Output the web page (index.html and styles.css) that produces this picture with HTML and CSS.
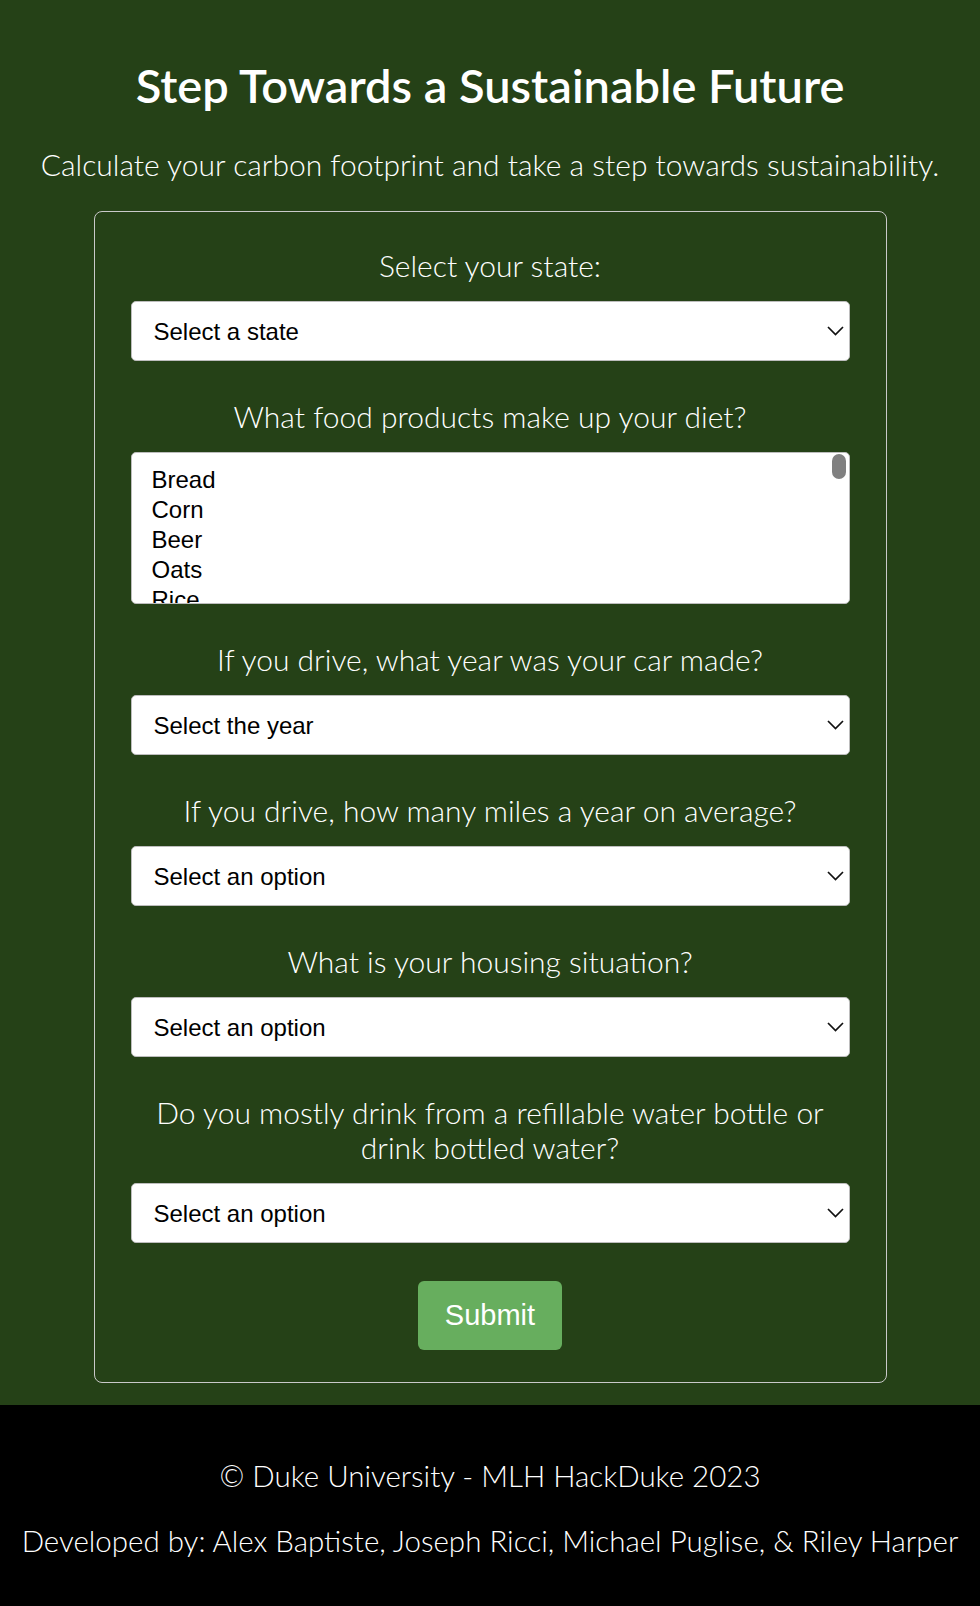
FILE: index.html
```html
<!DOCTYPE html>
<html lang="en">
<head>
<meta charset="utf-8">
<title>Step Towards a Sustainable Future</title>
<link rel="stylesheet" href="styles.css">
</head>
<body>
<header class="hero">
  <h1 class="hero-title">Step Towards a Sustainable Future</h1>
  <p class="hero-sub">Calculate your carbon footprint and take a step towards sustainability.</p>
</header>
<main class="card">
  <form class="form">
    <div class="field">
      <label class="field-label" for="state">Select your state:</label>
      <div class="select-wrap">
        <select id="state" class="select"><option>Select a state</option></select>
        <svg class="chevron" width="17" height="10" viewBox="0 0 17 10"><path d="M1 1 L8.5 8.5 L16 1" fill="none" stroke="#111" stroke-width="1.7"/></svg>
      </div>
    </div>
    <div class="field">
      <label class="field-label">What food products make up your diet?</label>
      <div class="listbox" role="listbox" aria-multiselectable="true">
        <div class="list-item">Bread</div>
        <div class="list-item">Corn</div>
        <div class="list-item">Beer</div>
        <div class="list-item">Oats</div>
        <div class="list-item">Rice</div>
        <span class="thumb"></span>
      </div>
    </div>
    <div class="field">
      <label class="field-label" for="year">If you drive, what year was your car made?</label>
      <div class="select-wrap">
        <select id="year" class="select"><option>Select the year</option></select>
        <svg class="chevron" width="17" height="10" viewBox="0 0 17 10"><path d="M1 1 L8.5 8.5 L16 1" fill="none" stroke="#111" stroke-width="1.7"/></svg>
      </div>
    </div>
    <div class="field">
      <label class="field-label" for="miles">If you drive, how many miles a year on average?</label>
      <div class="select-wrap">
        <select id="miles" class="select"><option>Select an option</option></select>
        <svg class="chevron" width="17" height="10" viewBox="0 0 17 10"><path d="M1 1 L8.5 8.5 L16 1" fill="none" stroke="#111" stroke-width="1.7"/></svg>
      </div>
    </div>
    <div class="field">
      <label class="field-label" for="housing">What is your housing situation?</label>
      <div class="select-wrap">
        <select id="housing" class="select"><option>Select an option</option></select>
        <svg class="chevron" width="17" height="10" viewBox="0 0 17 10"><path d="M1 1 L8.5 8.5 L16 1" fill="none" stroke="#111" stroke-width="1.7"/></svg>
      </div>
    </div>
    <div class="field">
      <label class="field-label narrow" for="water">Do you mostly drink from a refillable water bottle or drink bottled water?</label>
      <div class="select-wrap">
        <select id="water" class="select"><option>Select an option</option></select>
        <svg class="chevron" width="17" height="10" viewBox="0 0 17 10"><path d="M1 1 L8.5 8.5 L16 1" fill="none" stroke="#111" stroke-width="1.7"/></svg>
      </div>
    </div>
    <div class="actions">
      <button type="button" class="submit">Submit</button>
    </div>
  </form>
</main>
<footer class="footer">
  <p class="footer-line">© Duke University - MLH HackDuke 2023</p>
  <p class="footer-line">Developed by: Alex Baptiste, Joseph Ricci, Michael Puglise, &amp; Riley Harper</p>
</footer>
</body>
</html>
```
FILE: styles.css
```css
* { box-sizing: border-box; }
html, body { margin: 0; padding: 0; }
body {
  background: #254117;
  color: #fff;
  font-family: "Lato", "Open Sans", sans-serif;
  font-weight: 300;
}
.hero { text-align: center; padding-top: 58px; }
.hero-title {
  margin: 0;
  font-size: 47px;
  line-height: 54px;
  font-weight: 600;
}
.hero-sub {
  margin: 35px 0 0;
  font-size: 30px;
  line-height: 35px;
}
.card {
  width: 793px;
  margin: 29px auto 22px;
  border: 1px solid #c9c9c9;
  border-radius: 8px;
  padding: 36px 36px 32px;
}
.form { display: flex; flex-direction: column; }
.field { display: flex; flex-direction: column; margin-bottom: 38px; }
.field-label {
  display: block;
  text-align: center;
  font-size: 30px;
  line-height: 35px;
  margin-bottom: 18px;
}
.field-label.narrow { padding: 0 20px; }
.select-wrap { position: relative; }
.select {
  appearance: none;
  -webkit-appearance: none;
  width: 100%;
  height: 60px;
  background: #fff;
  border: 1px solid #bdbdbd;
  border-radius: 5px;
  padding: 0 40px 0 22px;
  font-family: "Liberation Sans", Arial, sans-serif;
  font-size: 24px;
  color: #000;
  margin: 0;
}
.chevron { position: absolute; right: 6px; top: 25px; pointer-events: none; }
.listbox {
  position: relative;
  height: 152px;
  overflow: hidden;
  background: #fff;
  border: 1px solid #bdbdbd;
  border-radius: 5px;
  padding: 12px 20px 0;
  font-family: "Liberation Sans", Arial, sans-serif;
  font-size: 24px;
  line-height: 30px;
  color: #000;
}
.thumb {
  position: absolute;
  top: 1px;
  right: 3px;
  width: 14px;
  height: 25px;
  border-radius: 7px;
  background: #808080;
}
.actions { display: flex; justify-content: center; }
.submit {
  background: #67ae5e;
  color: #fff;
  border: none;
  border-radius: 6px;
  width: 144px;
  height: 69px;
  font-family: "Liberation Sans", Arial, sans-serif;
  font-size: 29px;
  padding: 0;
}
.footer {
  background: #000;
  text-align: center;
  padding: 53px 0 50px;
}
.footer-line {
  margin: 0;
  font-size: 29.5px;
  line-height: 35px;
}
.footer-line + .footer-line { margin-top: 30px; }
```
